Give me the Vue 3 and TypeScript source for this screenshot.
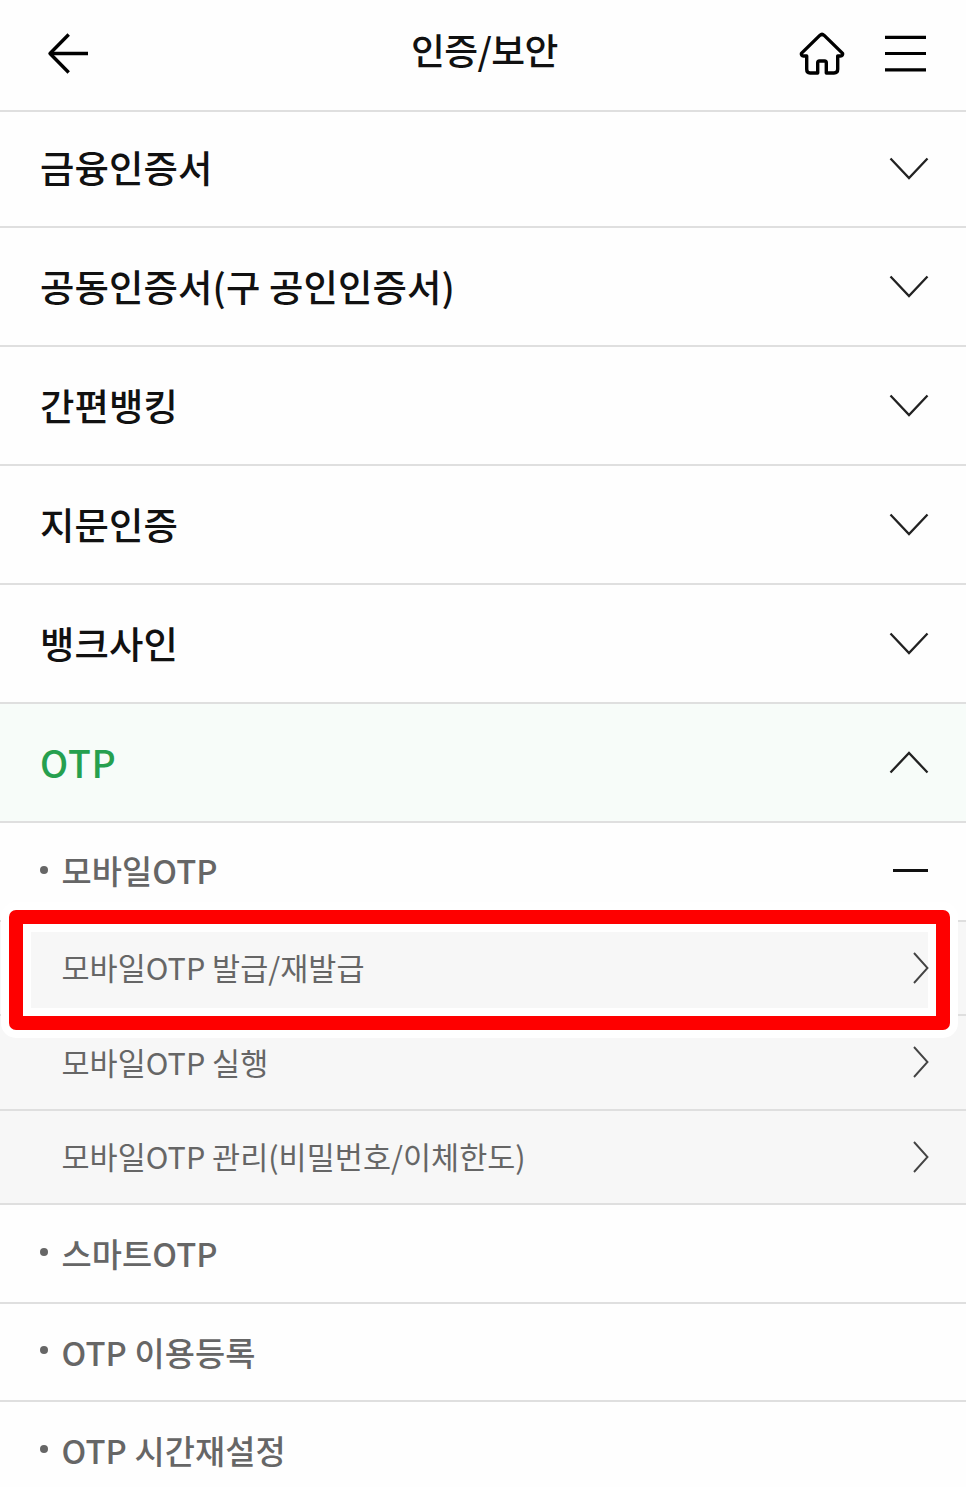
<script setup lang="ts">
interface Leaf {
  label: string
  highlighted?: boolean
}
interface SubMenu {
  label: string
  leaves?: Leaf[]
}
interface Menu {
  label: string
  open?: boolean
}

const menus: Menu[] = [
  { label: '금융인증서' },
  { label: '공동인증서(구 공인인증서)' },
  { label: '간편뱅킹' },
  { label: '지문인증' },
  { label: '뱅크사인' },
  { label: 'OTP', open: true },
]

const subMenus: SubMenu[] = [
  {
    label: '모바일OTP',
    leaves: [
      { label: '모바일OTP 발급/재발급', highlighted: true },
      { label: '모바일OTP 실행' },
      { label: '모바일OTP 관리(비밀번호/이체한도)' },
    ],
  },
  { label: '스마트OTP' },
  { label: 'OTP 이용등록' },
  { label: 'OTP 시간재설정' },
]
</script>

<template>
  <div class="screen">
    <header class="header">
      <button class="icon-button" aria-label="뒤로">
        <svg width="42" height="42" viewBox="0 0 42 42" fill="none" stroke="#000" stroke-width="3.4">
          <path d="M41 21.5H3" />
          <path d="M21.7 2.5L3 21.5L21.7 40.5" stroke-linejoin="round" />
        </svg>
      </button>
      <h1 class="title">인증/보안</h1>
      <div class="actions">
        <button class="icon-button" aria-label="홈">
          <svg width="46" height="44" viewBox="0 -0.8 46 44" fill="none" stroke="#000" stroke-width="3.4" stroke-linejoin="round">
            <path d="M20.8 3.6Q23 1.6 25.2 3.6L43.6 21.6Q44 24 41.5 24.2H38.7V37.5Q38.7 41.2 35 41.2H27.3V31Q27.3 29.2 25.5 29.2H20.5Q18.7 29.2 18.7 31V41.2H11Q7.7 41.2 7.7 37.5V24.2H4.5Q2 24 2.4 21.6Z" />
          </svg>
        </button>
        <button class="icon-button" aria-label="메뉴">
          <svg width="41" height="38" viewBox="0 0 41 38" fill="none" stroke="#000" stroke-width="3.2">
            <path d="M0 3.3H41M0 19.5H41M0 35.8H41" />
          </svg>
        </button>
      </div>
    </header>

    <nav>
      <div v-for="menu in menus" :key="menu.label" class="menu" :class="{ open: menu.open }">
        <span>{{ menu.label }}</span>
        <svg class="chevron" width="40" height="24" viewBox="0 0 40 24" fill="none" stroke="#222" stroke-width="2.3">
          <path d="M1.5 1.5L20 21L38.5 1.5" />
        </svg>
      </div>

      <template v-for="sub in subMenus" :key="sub.label">
        <div class="sub" :class="{ expanded: sub.leaves }">
          <i class="bullet"></i>
          <span>{{ sub.label }}</span>
          <i v-if="sub.leaves" class="minus"></i>
        </div>
        <div v-for="leaf in sub.leaves" :key="leaf.label" class="leaf">
          <i v-if="leaf.highlighted" class="highlight"></i>
          <span>{{ leaf.label }}</span>
          <svg class="arrow" width="18" height="32" viewBox="0 0 18 32" fill="none" stroke="#444" stroke-width="1.9">
            <path d="M2 1L15.5 16L2 31" />
          </svg>
        </div>
      </template>
    </nav>
  </div>
</template>

<style>
body {
  margin: 0;
  background: #fff;
}
</style>

<style scoped>
.screen {
  width: 966px;
  height: 1487px;
  overflow: hidden;
  background: #fefefe;
  color: #111;
  font-family: "Noto Sans CJK KR", sans-serif;
}

.header,
.menu,
.sub,
.leaf {
  box-sizing: border-box;
  display: flex;
  align-items: center;
  border-bottom: 2px solid #dfdfdf;
  white-space: nowrap;
}

.header {
  display: grid;
  grid-template-columns: 1fr auto 1fr;
  height: 112px;
  padding: 0 40px 4px 47px;
}

.icon-button {
  display: flex;
  padding: 0;
  border: 0;
  background: none;
}

.title {
  margin: 0;
  padding: 0 4px 9px 0;
  font-size: 36.8px;
  font-weight: 500;
  letter-spacing: -0.6px;
  line-height: 54px;
}

.actions {
  display: flex;
  align-items: center;
  justify-content: flex-end;
  gap: 40px;
}

.menu {
  height: 119px;
  justify-content: space-between;
  padding: 0 37px 0 40px;
  font-size: 37.4px;
  font-weight: 500;
  letter-spacing: 0.1px;
  line-height: 54px;
}

.menu > span {
  padding-bottom: 1px;
}

.menu:first-child {
  height: 116px;
  padding-bottom: 1px;
}

.menu:first-child > span {
  padding-bottom: 4px;
}

.open {
  background: #f7fcf9;
  color: #26a04f;
  letter-spacing: 0.8px;
}

.open .chevron {
  margin-bottom: 2px;
  transform: rotate(180deg);
}

.sub {
  height: 98.5px;
  padding: 0 38px 0 40px;
  color: #666;
  font-size: 32.8px;
  font-weight: 500;
  letter-spacing: 0.1px;
  line-height: 48px;
}

.expanded > span {
  padding-bottom: 2px;
}

.bullet {
  width: 8px;
  height: 8px;
  margin: 0 13.5px 3px 0;
  border-radius: 50%;
  background: #666;
}

.minus {
  width: 35px;
  height: 3px;
  margin: 0 0 2px auto;
  background: #111;
}

.leaf {
  position: relative;
  height: 94.5px;
  justify-content: space-between;
  padding: 0 36px 0 61.5px;
  background: #f7f7f7;
  color: #666;
  font-size: 30.5px;
  letter-spacing: 0.03px;
  line-height: 44px;
}

.leaf > span,
.arrow {
  position: relative;
  z-index: 2;
}

.leaf > span {
  padding-bottom: 1px;
}

.highlight {
  position: absolute;
  z-index: 1;
  top: -12px;
  left: 9px;
  box-sizing: border-box;
  width: 941px;
  height: 120px;
  border: 14px solid #fe0000;
  border-radius: 7px;
  box-shadow: 0 0 0 8px #fff, inset 0 0 0 8px #fff;
}
</style>
